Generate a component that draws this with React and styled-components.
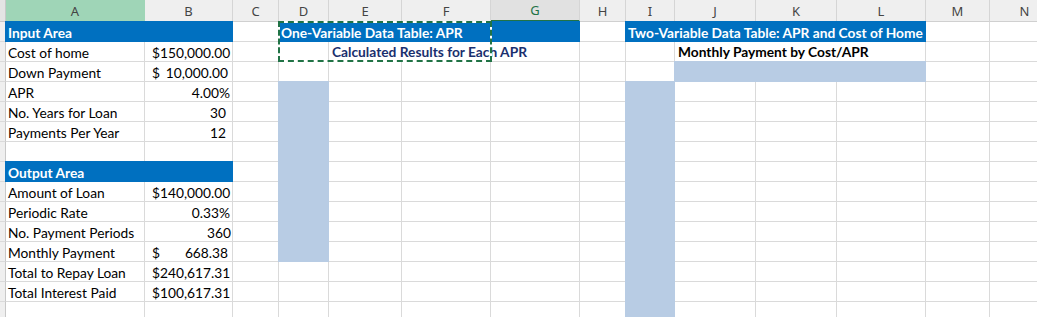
import React from 'react'
import styled, { createGlobalStyle, css } from 'styled-components'

const GlobalStyle = createGlobalStyle`
  html, body { margin: 0; padding: 0; background: #fff; overflow: hidden; }
  body { font-family: Lato, "Liberation Sans", sans-serif; }
`

// column widths incl. their right gridline: stub, A..N
const WIDTHS = [6, 139, 88, 46, 50, 73, 89, 89, 46, 49, 81, 81, 89, 64, 70]
const LETTERS = ['A', 'B', 'C', 'D', 'E', 'F', 'G', 'H', 'I', 'J', 'K', 'L', 'M', 'N']
const ROWS = 15
const LINE = '#dadada'
const BLUE = '#0070c0'
const SHADE = '#b8cce4'

const place = css`
  grid-column: ${p => p.$c} / span ${p => p.$cs || 1};
  grid-row: ${p => p.$r} / span ${p => p.$rs || 1};
`

const Sheet = styled.div`
  display: grid;
  grid-template-columns: ${WIDTHS.map(w => w + 'px').join(' ')};
  grid-template-rows: 22px repeat(${ROWS}, 20px);
  font-size: 13.75px;
  color: #000;
`

const Corner = styled.div`
  grid-column: 1;
  grid-row: 1;
  background: #e4e4e4;
  border-right: 1px solid #c8c8c8;
  border-bottom: 1px solid #c8c8c8;
  box-sizing: border-box;
`

const ColHead = styled.div`
  ${place};
  box-sizing: border-box;
  display: flex;
  align-items: center;
  justify-content: center;
  font-family: "Noto Sans", "Open Sans", sans-serif;
  font-size: 13px;
  color: ${p => (p.$selected ? '#217346' : '#444')};
  background: ${p => (p.$active ? '#9fd5b7' : p.$selected ? '#e1e1e1' : '#efefef')};
  border-right: 1px solid ${p => (p.$active ? '#9fd5b7' : '#d5d5d5')};
  border-bottom: ${p => (p.$selected ? '2px solid #217346' : '1px solid #d0d0d0')};
  ${p => p.$active && 'border-bottom-color: #9fd5b7;'}
`

const Stub = styled.div`
  ${place};
  box-sizing: border-box;
  background: #efefef;
  border-right: 1px solid #c8c8c8;
  border-bottom: 1px solid ${LINE};
`

const GridCell = styled.div`
  ${place};
  box-sizing: border-box;
  border-right: 1px solid ${LINE};
  border-bottom: 1px solid ${LINE};
`

const textCell = css`
  ${place};
  box-sizing: border-box;
  display: flex;
  align-items: flex-end;
  padding: 0 3px 1px;
  line-height: 17px;
  white-space: nowrap;
  z-index: 1;
`

const Label = styled.div`
  ${textCell};
  padding-left: 2px;
`

const Num = styled.div`
  ${textCell};
  justify-content: flex-end;
  padding-right: ${p => p.$pr ?? 3}px;
`

const Money = styled.div`
  ${textCell};
  justify-content: space-between;
  padding-left: 7px;
  padding-right: 5px;
`

const Banner = styled.div`
  ${textCell};
  margin: -1px 0 0 -1px;
  padding-left: 3px;
  background: ${BLUE};
  color: #fff;
  font-weight: 700;
`

const Caption = styled.div`
  ${textCell};
  background: #fff;
  border-right: 1px solid ${LINE};
  border-bottom: 1px solid ${LINE};
  font-weight: 700;
  color: ${p => p.$tone || '#000'};
`

const Shade = styled.div`
  ${place};
  margin: -1px 0 0 -1px;
  background: ${SHADE};
  z-index: 1;
`

const Marquee = styled.div`
  ${place};
  margin: -1px -1px 0 -1px;
  border: 2px solid #fff;
  position: relative;
  z-index: 3;
  pointer-events: none;

  &::after {
    content: '';
    position: absolute;
    inset: -2px;
    border: 2px dashed #217346;
  }
`

const labels = [
  [2, 'Cost of home'],
  [3, 'Down Payment'],
  [4, 'APR'],
  [5, 'No. Years for Loan'],
  [6, 'Payments Per Year'],
  [9, 'Amount of Loan'],
  [10, 'Periodic Rate'],
  [11, 'No. Payment Periods'],
  [12, 'Monthly Payment'],
  [13, 'Total to Repay Loan'],
  [14, 'Total Interest Paid'],
]

const values = [
  [2, 'money', '150,000.00'],
  [3, 'money', '10,000.00'],
  [4, 'num', '4.00%'],
  [5, 'num', '30', 7],
  [6, 'num', '12', 7],
  [9, 'money', '140,000.00'],
  [10, 'num', '0.33%'],
  [11, 'num', '360', 2],
  [12, 'money', '668.38'],
  [13, 'money', '240,617.31'],
  [14, 'money', '100,617.31'],
]

// sheet row n sits on grid row n + 1, column A on grid column 2
const R = n => n + 1

function App() {
  const lines = []
  for (let r = 1; r <= ROWS; r++) {
    lines.push(<Stub key={'s' + r} $c={1} $r={R(r)} />)
    for (let c = 2; c <= WIDTHS.length; c++) {
      lines.push(<GridCell key={r + '-' + c} $c={c} $r={R(r)} />)
    }
  }

  return (
    <>
      <GlobalStyle />
      <Sheet>
        <Corner />
        {LETTERS.map((l, i) => (
          <ColHead key={l} $c={i + 2} $r={1} $active={l === 'A'} $selected={l === 'G'}>
            {l}
          </ColHead>
        ))}
        <ColHead $c={16} $r={1} />

        {lines}

        <Banner $c={2} $cs={2} $r={R(1)}>Input Area</Banner>
        <Banner $c={2} $cs={2} $r={R(8)}>Output Area</Banner>
        <Banner $c={5} $cs={4} $r={R(1)}>One-Variable Data Table: APR</Banner>
        <Banner $c={10} $cs={4} $r={R(1)}>Two-Variable Data Table: APR and Cost of Home</Banner>

        {labels.map(([r, t]) => (
          <Label key={t} $c={2} $r={R(r)}>{t}</Label>
        ))}

        {values.map(([r, kind, v, pr]) =>
          kind === 'money' ? (
            <Money key={r} $c={3} $r={R(r)}>
              <span>$</span>
              <span>{v}</span>
            </Money>
          ) : (
            <Num key={r} $c={3} $r={R(r)} $pr={pr}>{v}</Num>
          )
        )}

        <Caption $c={6} $cs={3} $r={R(2)} $tone="#1a2f6e">Calculated Results for Each APR</Caption>
        <Caption $c={11} $cs={3} $r={R(2)}>Monthly Payment by Cost/APR</Caption>

        <Shade $c={11} $cs={3} $r={R(3)} />
        <Shade $c={5} $r={R(4)} $rs={9} />
        <Shade $c={10} $r={R(4)} $rs={12} />

        <Marquee $c={5} $cs={3} $r={R(1)} $rs={2} />
      </Sheet>
    </>
  )
}

export default App
